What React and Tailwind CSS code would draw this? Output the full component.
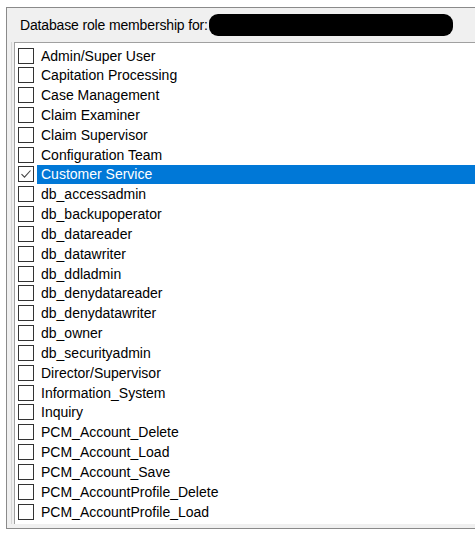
const roles = [
  "Admin/Super User",
  "Capitation Processing",
  "Case Management",
  "Claim Examiner",
  "Claim Supervisor",
  "Configuration Team",
  "Customer Service",
  "db_accessadmin",
  "db_backupoperator",
  "db_datareader",
  "db_datawriter",
  "db_ddladmin",
  "db_denydatareader",
  "db_denydatawriter",
  "db_owner",
  "db_securityadmin",
  "Director/Supervisor",
  "Information_System",
  "Inquiry",
  "PCM_Account_Delete",
  "PCM_Account_Load",
  "PCM_Account_Save",
  "PCM_AccountProfile_Delete",
  "PCM_AccountProfile_Load",
];

const selected = "Customer Service";

function CheckBox({ checked }) {
  return (
    <span className="w-4 h-4 shrink-0 border border-[#333333] bg-white flex items-center justify-center">
      {checked && (
        <svg width="12" height="12" viewBox="0 0 12 12">
          <path d="M1.5 6.2 L4.5 9.2 L10.5 2.5" fill="none" stroke="#444" strokeWidth="1.1" />
        </svg>
      )}
    </span>
  );
}

function RoleRow({ name }) {
  const isSel = name === selected;
  return (
    <div className="h-[19.83px] flex items-center pl-[3px]">
      <CheckBox checked={isSel} />
      <span
        className={
          isSel
            ? "ml-[3px] flex-1 h-[19px] flex items-center pl-[4px] bg-[#0078d7] text-white"
            : "ml-[3px] flex-1 h-[19px] flex items-center pl-[4px] text-black"
        }
      >
        {name}
      </span>
    </div>
  );
}

export default function App() {
  return (
    <div className="w-[475px] h-[544px] bg-white overflow-hidden pt-[7px] pl-[6px] font-['Liberation_Sans',Arial,sans-serif] text-[14px] leading-none">
      <div className="w-[480px] h-[522px] border border-[#8a8a8a] bg-[#f0f0f0] flex flex-col">
        <div className="h-[34px] shrink-0 flex items-center pl-[13px] text-black">
          <span className="tracking-[-0.15px]">Database role membership for:</span>
          <span className="ml-[1px] w-[244px] h-[22px] rounded-[9px] bg-black" />
        </div>
        <div className="h-[482px] ml-[4px] border-l border-[#d6d6d6] pl-[2px]">
          <div className="h-full bg-white border-l border-t border-[#a0a0a0] pt-[2.6px] overflow-hidden">
            {roles.map((r) => (
              <RoleRow key={r} name={r} />
            ))}
          </div>
        </div>
      </div>
    </div>
  );
}
